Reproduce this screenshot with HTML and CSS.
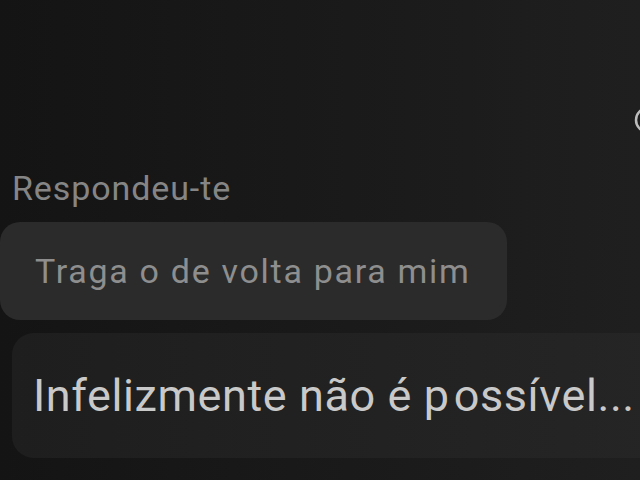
FILE: index.html
```html
<!DOCTYPE html>
<html>
<head>
  <meta charset="UTF-8">
  <meta name="viewport" content="width=device-width, initial-scale=1.0">
  <title>Respondeu-te</title>
  <link rel="stylesheet" href="styles.css">
</head>
<body>
  <div class="screen">
    <svg class="edge-icon" width="16" height="30" viewBox="0 0 16 30">
      <circle cx="14" cy="15" r="12" fill="none" stroke="#bdbdbd" stroke-width="2.5"/>
    </svg>

    <div class="reply">
      <p class="reply-label">Respondeu-te</p>
      <div class="quoted">Traga o de volta para mim</div>
    </div>

    <div class="message">Infelizmente não é p<span class="gap"></span>ossível...</div>
  </div>
</body>
</html>
```

FILE: styles.css
```css
body {
  margin: 0;
  padding: 0;
  background: linear-gradient(to right, #141414, #1f1f1f);
  font-family: 'Roboto', 'Liberation Sans', sans-serif;
  width: 640px;
  height: 480px;
  overflow: hidden;
}

.screen {
  position: relative;
  height: 480px;
  display: flex;
  flex-direction: column;
  padding-top: 168px;
  box-sizing: border-box;
}

.edge-icon {
  position: absolute;
  top: 105px;
  right: -10px;
}

.reply {
  display: flex;
  flex-direction: column;
  align-items: flex-start;
}

.reply-label {
  margin: 0 0 14px 12px;
  font-size: 34px;
  line-height: 40px;
  letter-spacing: 0.9px;
  color: #858585;
}

.quoted {
  width: 507px;
  height: 98px;
  box-sizing: border-box;
  padding-left: 35px;
  display: flex;
  align-items: center;
  background: #2b2b2b;
  border-radius: 20px;
  font-size: 34px;
  letter-spacing: 1.7px;
  color: #8e8e8e;
}

.message {
  margin: 13px -20px 0 12px;
  height: 125px;
  box-sizing: border-box;
  padding-left: 21px;
  display: flex;
  align-items: center;
  background: linear-gradient(to right, #1e1e1e, #252525);
  border-radius: 22px;
  font-size: 45px;
  letter-spacing: 0.6px;
  color: #c9c9c9;
  white-space: nowrap;
}

.gap {
  display: inline-block;
  width: 4px;
}
```
